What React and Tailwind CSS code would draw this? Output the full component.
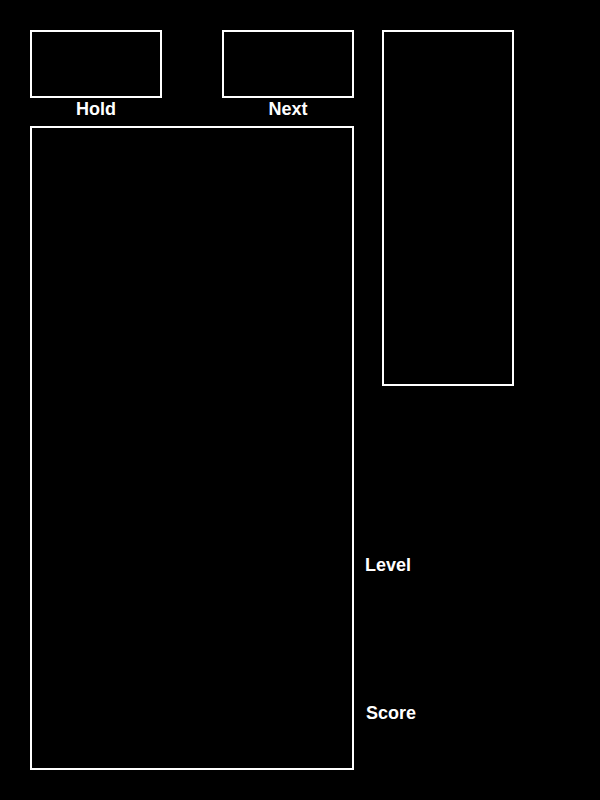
export default function App() {
    return (
        <div
            className="w-[600px] h-[800px] bg-black text-white flex p-[30px]"
            style={{ fontFamily: '"Liberation Sans", Arial, sans-serif' }}
        >
            {/* Left column: hold / next / board */}
            <div className="flex flex-col w-[324px]">
                <div className="flex justify-between">
                    <div className="flex flex-col items-center w-[132px]">
                        <div className="w-[132px] h-[68px] border-2 border-white" />
                        <div className="h-[28px] pt-px text-[18px] leading-[20px] font-bold">Hold</div>
                    </div>
                    <div className="flex flex-col items-center w-[132px]">
                        <div className="w-[132px] h-[68px] border-2 border-white" />
                        <div className="h-[28px] pt-px text-[18px] leading-[20px] font-bold">Next</div>
                    </div>
                </div>
                <div className="w-[324px] h-[644px] border-2 border-white" />
            </div>

            {/* Right column: queue / level / score */}
            <div className="flex flex-col">
                <div className="ml-[28px] w-[132px] h-[356px] border-2 border-white" />
                <div className="ml-[11px] mt-[169px] text-[18px] leading-[20px] font-bold">Level</div>
                <div className="ml-[12px] mt-[128px] text-[18px] leading-[20px] font-bold">Score</div>
            </div>
        </div>
    )
}
